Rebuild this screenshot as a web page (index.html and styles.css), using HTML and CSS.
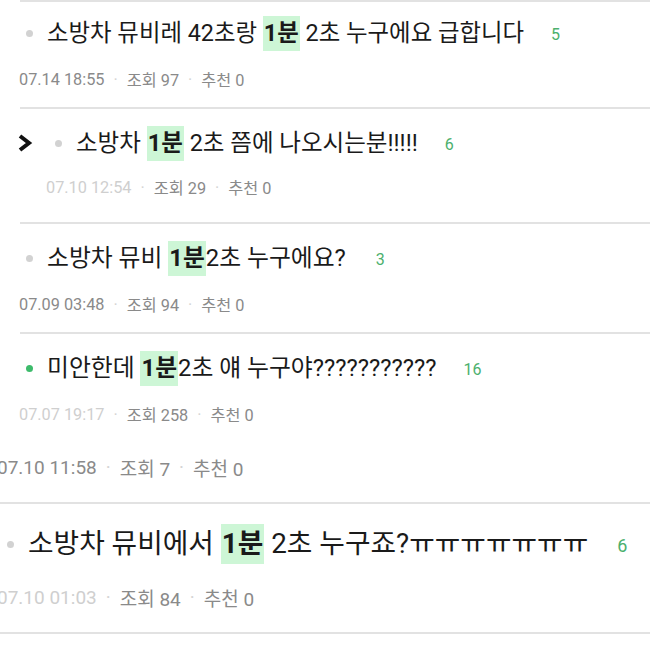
FILE: index.html
```html
<!DOCTYPE html>
<html lang="ko">
<head>
<meta charset="utf-8">
<title>게시글 목록</title>
<link rel="stylesheet" href="styles.css">
</head>
<body>
<div class="list">
  <hr class="rule rule--inset">

  <div class="post post--1">
    <div class="title-row">
      <span class="dot"></span>
      <span class="title">소방차 뮤비레 42초랑 <b class="hl">1분</b> 2초 누구에요 급합니다</span>
      <span class="count">5</span>
    </div>
    <div class="meta">
      <span class="date">07.14 18:55</span><span class="sep">·</span><span>조회 97</span><span class="sep">·</span><span>추천 0</span>
    </div>
  </div>
  <hr class="rule rule--inset">

  <div class="post post--2">
    <div class="title-row">
      <svg class="chev" width="16" height="20" viewBox="0 0 16 20"><polyline points="3,3 12,10 3,17" fill="none" stroke="#111" stroke-width="4" stroke-linejoin="miter"/></svg>
      <span class="dot"></span>
      <span class="title">소방차 <b class="hl">1분</b> 2초 쯤에 나오시는분!!!!!</span>
      <span class="count">6</span>
    </div>
    <div class="meta">
      <span class="date date--light">07.10 12:54</span><span class="sep">·</span><span>조회 29</span><span class="sep">·</span><span>추천 0</span>
    </div>
  </div>
  <hr class="rule rule--inset">

  <div class="post post--3">
    <div class="title-row">
      <span class="dot"></span>
      <span class="title">소방차 뮤비 <b class="hl">1분</b>2초 누구에요?</span>
      <span class="count count--wide">3</span>
    </div>
    <div class="meta">
      <span class="date">07.09 03:48</span><span class="sep">·</span><span>조회 94</span><span class="sep">·</span><span>추천 0</span>
    </div>
  </div>
  <hr class="rule rule--inset">

  <div class="post post--4">
    <div class="title-row">
      <span class="dot dot--green"></span>
      <span class="title">미안한데 <b class="hl">1분</b>2초 얘 누구야???????????</span>
      <span class="count">16</span>
    </div>
    <div class="meta">
      <span class="date date--light">07.07 19:17</span><span class="sep">·</span><span>조회 258</span><span class="sep">·</span><span>추천 0</span>
    </div>
  </div>

  <div class="post post--5">
    <div class="meta meta--big">
      <span class="date">07.10 11:58</span><span class="sep">·</span><span>조회 7</span><span class="sep">·</span><span>추천 0</span>
    </div>
  </div>
  <hr class="rule">

  <div class="post post--6">
    <div class="title-row">
      <span class="dot"></span>
      <span class="title">소방차 뮤비에서 <b class="hl">1분</b> 2초 누구죠?ㅠㅠㅠㅠㅠㅠㅠ</span>
      <span class="count count--wider">6</span>
    </div>
    <div class="meta meta--big">
      <span class="date date--light">07.10 01:03</span><span class="sep">·</span><span>조회 84</span><span class="sep">·</span><span>추천 0</span>
    </div>
  </div>
  <hr class="rule">
</div>
</body>
</html>
```

FILE: styles.css
```css
* { box-sizing: border-box; }

html, body {
  margin: 0;
  padding: 0;
  background: #ffffff;
}

body {
  width: 650px;
  height: 650px;
  overflow: hidden;
  font-family: Roboto, "Noto Sans CJK KR", sans-serif;
  color: #222;
}

.list {
  width: 650px;
}

.rule {
  display: block;
  margin: 0;
  height: 2px;
  border: 0;
  background: #e2e2e2;
}

.rule--inset {
  margin-left: 20px;
}

.title-row {
  display: flex;
  align-items: center;
  height: 32px;
  white-space: nowrap;
}

.dot {
  flex: none;
  width: 7px;
  height: 7px;
  border-radius: 50%;
  background: #d2d2d2;
  margin-right: 14px;
}

.dot--green {
  background: #3dbb6b;
}

.title {
  font-size: 23.4px;
  line-height: 32px;
  color: #1a1a1a;
}

.hl {
  font-weight: 700;
  background: #cdf6d6;
  padding: 3px 1px 4px;
}

.count {
  font-size: 16px;
  color: #4cb06d;
  margin-left: 27px;
  padding-top: 2px;
}

.count--wide { margin-left: 30px; }
.count--wider { margin-left: 29px; }

.meta {
  display: flex;
  align-items: center;
  height: 20px;
  font-size: 16.3px;
  color: #8a8a8a;
  white-space: nowrap;
}

.date { color: #8a8a8a; }
.date--light { color: #cfcfcf; }

.sep {
  color: #d4d4d4;
  margin: 0 9px;
}

/* post 1 */
.post--1 { padding: 15px 0 18px; }
.post--1 .title-row { padding-left: 26px; }
.post--1 .meta { margin-top: 20px; padding-left: 19px; }

/* post 2 */
.post--2 { padding: 18px 0 25px; }
.post--2 .title-row { padding-left: 17px; }
.post--2 .chev { flex: none; margin-right: 22px; }
.post--2 .title { font-size: 23.5px; }
.post--2 .meta { margin-top: 18px; padding-left: 46px; }

/* post 3 */
.post--3 { padding: 18px 0 18px; }
.post--3 .title-row { padding-left: 26px; }
.post--3 .title { font-size: 23.8px; }
.post--3 .meta { margin-top: 20px; padding-left: 19px; }

/* post 4 */
.post--4 { padding: 18px 0 0; }
.post--4 .title-row { padding-left: 26px; }
.post--4 .title { font-size: 23.8px; }
.post--4 .meta { margin-top: 20px; padding-left: 19px; }

/* post 5 */
.post--5 { padding: 32px 0 24px; }
.post--5 .meta { margin-left: -3px; }

.meta--big {
  height: 22px;
  font-size: 19px;
}

.meta--big .sep { margin: 0 9px; }

/* post 6 */
.post--6 { padding: 22px 0 24px; }
.post--6 .title-row { padding-left: 7px; height: 36px; }
.post--6 .title { font-size: 27.8px; line-height: 36px; }
.post--6 .count { font-size: 18px; }
.post--6 .meta { margin-top: 24px; margin-left: -3px; }
```
